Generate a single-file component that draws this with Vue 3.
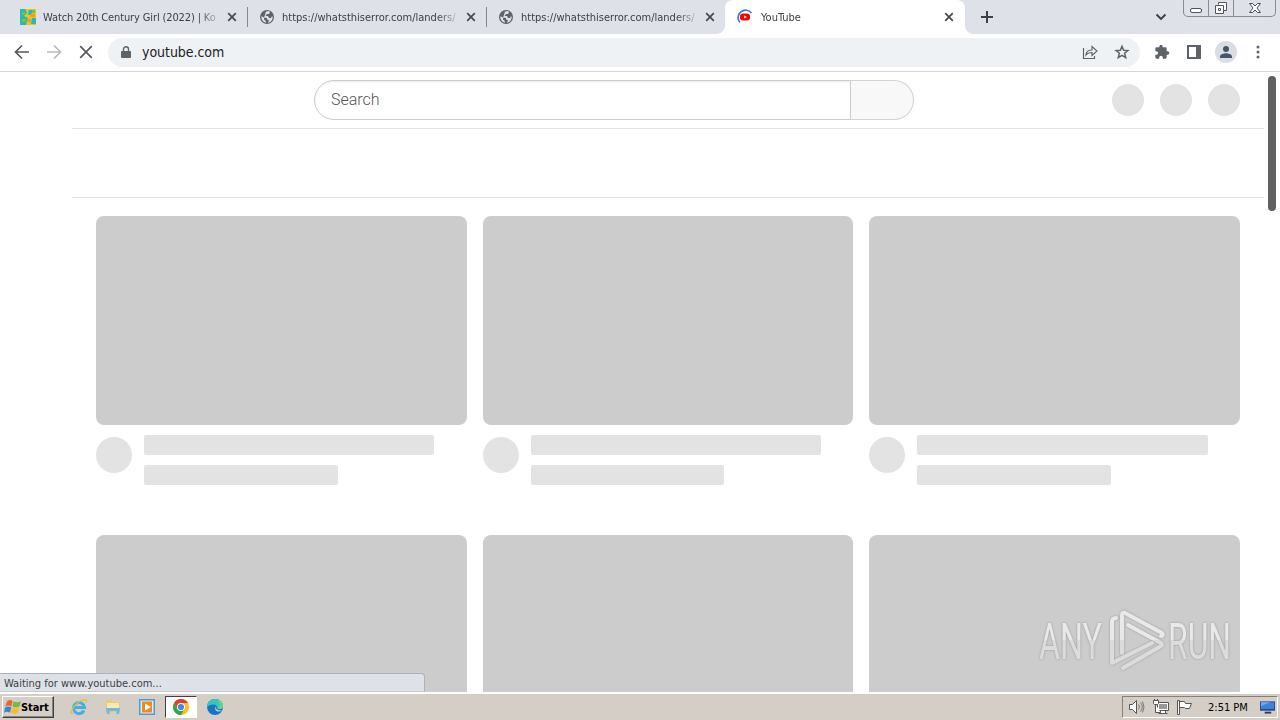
<template>
  <div class="screen">
    <div class="tab-strip">
      <div v-for="(tab, index) in tabs" :key="index" class="tab" :class="{ active: tab.active, divided: index < 2 }">
        <svg v-if="tab.icon === 'film'" class="favicon" viewBox="0 0 16 16">
          <path fill="#e5c52b" d="M0 0h16v16H0z" />
          <path fill="#28b9b0" d="M0 0h5l2 4-3 3 4 2-2 7H0zM9 1h4l-2 5H8zM12 9h4v6h-5z" />
          <path fill="#ef9d28" d="M10 5h5v3h-5zM7 10h4v3H7z" />
          <path fill="#6fc259" d="M2 3h3v3H2zM2 10h4v3H2zM12 1h3v3h-3z" />
        </svg>
        <svg v-else-if="tab.icon === 'globe'" class="favicon" viewBox="0 0 16 16">
          <circle cx="8" cy="8" r="7" fill="#5f6368" />
          <path fill="#dee1e8" d="M7 2.500 10 2l1 1-1 2H8L6.500 7H9l1 2h2l1-2 .7 1c0 3-2 5.500-4.700 5.700L10 11 8 10.500V9L5 8.500 2.500 7.200 2.300 8c0 3 2 5 4.500 5.700V12L5 10.500V9z" />
        </svg>
        <svg v-else class="favicon" viewBox="0 0 16 16">
          <path fill="none" stroke="#3b78d8" stroke-width="1.700" d="M2.800 13.500A7 7 0 0 1 14.500 4" />
          <rect x="3" y="4.500" width="10" height="7" rx="3" fill="#f00" />
          <path fill="#fff" d="m7.200 6.500 2.600 1.500-2.600 1.500z" />
        </svg>
        <span class="tab-title" :class="tab.icon">{{ tab.title }}</span>
        <svg class="tab-close" viewBox="0 0 10 10"><path d="m1.200 1.200 7.600 7.600M8.800 1.200 1.200 8.800" /></svg>
      </div>
      <svg class="new-tab" viewBox="0 0 12 12"><path d="M6 0v12M0 6h12" /></svg>
      <svg class="tab-search" viewBox="0 0 12 8"><path d="m1.500 1.500 4.500 4.500 4.500-4.500" /></svg>
      <div class="window-buttons">
        <span><svg width="14" height="16" viewBox="0 0 14 16"><rect x="1.500" y="8.500" width="11" height="4" rx="1.500" /></svg></span>
        <span><svg width="14" height="16" viewBox="0 0 14 16"><path d="M4.500 4.500v-2h8v8h-3M1.500 5.500h8v8h-8zM4.500 8.500h2v2h-2z" /></svg></span>
        <span class="wide"><svg width="14" height="16" viewBox="0 0 14 16"><path d="M1.500 3.500h3L7 6l2.500-2.500h3L9 8l3.500 4.500h-3L7 10l-2.500 2.500h-3L5 8z" /></svg></span>
      </div>
    </div>

    <div class="toolbar">
      <svg class="nav" viewBox="0 0 16 16"><path d="M15 8H2M8 1.500 1.500 8 8 14.500" /></svg>
      <svg class="nav disabled" viewBox="0 0 16 16"><path d="M1 8h13M8 1.500 14.500 8 8 14.500" /></svg>
      <svg class="nav" viewBox="0 0 16 16"><path d="m2.200 2.200 11.600 11.600M13.800 2.200 2.200 13.800" /></svg>
      <div class="omnibox">
        <svg class="lock" viewBox="0 0 10 13">
          <path fill="#5f6368" d="M1 5h8q1 0 1 1v5q0 1-1 1H1q-1 0-1-1V6q0-1 1-1z" />
          <path fill="none" stroke="#5f6368" stroke-width="1.400" d="M2.500 6V3.300a2.500 2.500 0 0 1 5 0V6" />
        </svg>
        <span class="url">youtube.com</span>
        <svg class="tool" viewBox="0 0 16 16"><path d="M1.500 4v10.500h11V12M4 11q.5-5 6-5V2.500L15 7l-5 4.500V8.500q-4 0-6 2.500z" /></svg>
        <svg class="tool star" viewBox="0 0 16 16"><path d="m8 2.200 1.600 4 4.300.3-3.300 2.800 1.100 4.300L8 11.300l-3.700 2.300 1.100-4.300-3.300-2.800 4.300-.3z" /></svg>
      </div>
      <svg class="ext" viewBox="0 0 24 24"><path fill="#5f6368" d="M20.500 11H19V7a2 2 0 0 0-2-2h-4V3.500a2.500 2.500 0 0 0-5 0V5H4a2 2 0 0 0-2 2v3.800h1.500a2.700 2.700 0 0 1 0 5.400H2V20a2 2 0 0 0 2 2h3.800v-1.500a2.700 2.700 0 0 1 5.400 0V22H17a2 2 0 0 0 2-2v-4h1.500a2.500 2.500 0 0 0 0-5z" /></svg>
      <svg class="panel" viewBox="0 0 14 14"><path fill="#5f6368" d="M0 0h14v14H0zM2 2v10h7V2z" fill-rule="evenodd" /></svg>
      <svg class="avatar" viewBox="0 0 22 22">
        <circle cx="11" cy="11" r="11" fill="#dadde3" />
        <path fill="#46536d" d="M11 5a3 3 0 1 1 0 6 3 3 0 0 1 0-6zM5 17v-1.500C5 13 9 12.200 11 12.200s6 .8 6 3.300V17z" />
      </svg>
      <svg class="dots" viewBox="0 0 4 14"><circle cx="2" cy="2" r="1.500" /><circle cx="2" cy="7" r="1.500" /><circle cx="2" cy="12" r="1.500" /></svg>
    </div>

    <div class="page">
      <div class="masthead">
        <div class="search">
          <div class="search-input">Search</div>
          <div class="search-button"></div>
        </div>
        <div class="icons"><i v-for="n in 3" :key="n"></i></div>
      </div>
      <div class="chips"></div>
      <div class="grid">
        <div v-for="n in 6" :key="n" class="video">
          <div class="thumb"></div>
          <div class="details">
            <div class="channel"></div>
            <div class="lines">
              <div class="line"></div>
              <div class="line short"></div>
            </div>
          </div>
        </div>
      </div>
      <div class="scrollbar"></div>
      <div class="status">Waiting for www.youtube.com...</div>
      <svg class="watermark" viewBox="0 0 200 70">
        <defs>
          <linearGradient id="shine" gradientUnits="userSpaceOnUse" x1="0" y1="0" x2="0" y2="70">
            <stop offset="0.5" stop-color="#e9e9e9" />
            <stop offset="0.5" stop-color="#dcdcdc" />
          </linearGradient>
        </defs>
        <g class="letters">
          <text x="3" y="54" textLength="63" lengthAdjust="spacingAndGlyphs">ANY</text>
          <text x="132" y="54" textLength="63" lengthAdjust="spacingAndGlyphs">RUN</text>
        </g>
        <g class="mark">
          <path d="M80 13q-4 0-4 4v41l40-20" />
          <path d="M86 48V10q0-3 3-2l37 20q2 2-1 3" />
          <path d="m92 20 33 18q2 2 0 3L87 63" />
        </g>
      </svg>
    </div>

    <div class="taskbar">
      <div class="start">
        <svg viewBox="0 0 16 16">
          <path fill="#e8652b" d="M3 2q3-2 5 0L7 7Q4 5 1 7z" />
          <path fill="#79b843" d="M9 2q3 2 7 0l-1.500 5q-3.500 2-6.500 0z" />
          <path fill="#3a84d2" d="M1 8q3-2 6 0l-1.500 5Q3 11 0 13z" />
          <path fill="#f5bd26" d="M8 8q3 2 6.500 0L13 13q-3 2-6.500 0z" />
        </svg>
        <span>Start</span>
      </div>
      <div class="app">
        <svg viewBox="0 0 18 18">
          <path fill="none" stroke="#42aee4" stroke-width="3" d="M14 12.500A5.500 5.500 0 1 1 14.500 9.500H5" />
          <path fill="none" stroke="#e5bd42" stroke-width="1.300" d="M3 15Q-1 17 3 10 7 4 13 2q5-1 3 3" />
        </svg>
      </div>
      <div class="app">
        <svg viewBox="0 0 18 18">
          <path fill="#e8cc72" d="M2 2h5l1 2h8v10H2z" />
          <path fill="#f8eab0" d="M3 5h12v5H3z" />
          <path fill="#72bada" d="M2 10h14l-1 6h-2.500v-3h-7v3H3z" />
        </svg>
      </div>
      <div class="app">
        <svg viewBox="0 0 18 18">
          <path fill="#4d9bd0" d="M1 1h16v16H1z" /><path fill="#d9edf7" d="M2.500 2.500h13v13h-13z" />
          <path fill="#f18a1d" d="M4 3.500h10v11H4z" /><path fill="#fff" d="m7 5.500 6 3.500-6 3.500z" />
        </svg>
      </div>
      <div class="app pressed">
        <svg viewBox="0 0 18 18">
          <circle cx="9" cy="9" r="8" fill="#fbc116" />
          <path fill="#e33b2e" d="M2.070 5A8 8 0 0 1 15.930 5H9L5.500 11z" />
          <path fill="#2da94f" d="M2.070 5A8 8 0 0 0 9 17l3.500-6h-7z" />
          <circle cx="9" cy="9" r="4" fill="#fff" /><circle cx="9" cy="9" r="3.100" fill="#4285f4" />
        </svg>
      </div>
      <div class="app">
        <svg viewBox="0 0 18 18">
          <circle cx="9" cy="9" r="8" fill="#1674c5" />
          <path fill="#38c5c1" d="M1 9C1 4 4.500 1 9 1s8 3 8 7c0 4-5 4-6 2 1-4-6-5-10-1z" />
          <path fill="#67d579" d="M13 2.200c2.500 1.400 4 3.500 4 5.800 0 3.500-4 3.800-5.500 2.600C15 9 15 5 11 3z" />
          <path fill="#d6d0c8" d="M10 8q-1 5 6 4.500-2 1.500-5 .8-3-1-1-5.300z" />
        </svg>
      </div>
      <div class="tray">
        <svg class="speaker" viewBox="0 0 18 16">
          <path fill="#fff" stroke="#555" d="M1.500 5.500h3l4-4v13l-4-4h-3z" />
          <path fill="none" stroke="#777" d="M10.500 5.500q2 2.500 0 5M12.500 3.500q3.500 4.500 0 9M14.500 2.500q3 5.500 0 11" />
        </svg>
        <svg class="network" viewBox="0 0 16 16">
          <path fill="#fff" stroke="#555" d="M4.500 3.500h11v8h-11zM7.500 11.500h5v3h-5zM5.500 14.500h9" /><path fill="#999" d="M6 5h8v5H6z" />
          <path fill="#fff" stroke="#555" d="M.5 1.500h5v3l-1 1h-3l-1-1zM2.500 5v8.500h5M1.500 0v2M4.500 0v2" />
        </svg>
        <svg class="flag" viewBox="0 0 16 16"><path fill="#fff" stroke="#555" d="M1.500 1.500h2v14h-2zM3.500 2.500h5l1 2h6l-2 5h-4l-1-1h-5z" /></svg>
        <span class="clock">2:51 PM</span>
        <svg class="desktop" viewBox="0 0 16 14"><path fill="#234e95" d="M0 1h16v10H0z" /><path fill="#3e83d9" d="M1 2h14v7H1z" /><path fill="#72adf0" d="M1 2h10L1 6z" /><path fill="#353c48" d="M5 12h7v2H5z" /></svg>
      </div>
    </div>
  </div>
</template>

<script setup>
import { ref } from 'vue';

const tabs = ref([
  { title: 'Watch 20th Century Girl (2022) | Ko', icon: 'film' },
  { title: 'https://whatsthiserror.com/landers/', icon: 'globe' },
  { title: 'https://whatsthiserror.com/landers/', icon: 'globe' },
  { title: 'YouTube', icon: 'youtube', active: true },
]);
</script>

<style>
body {
  margin: 0;
  overflow: hidden;
}
</style>

<style scoped>
* {
  box-sizing: border-box;
}

svg {
  display: block;
  flex: none;
}

.screen {
  width: 1280px;
  height: 720px;
  display: flex;
  flex-direction: column;
  overflow: hidden;
  background: #fff;
  font-family: Tahoma, "DejaVu Sans Condensed", "DejaVu Sans", sans-serif;
  font-stretch: condensed;
  font-size: 11px;
  color: #3c4043;
}

.tab-strip {
  display: flex;
  height: 34px;
  padding-left: 8px;
  background: #dee1e8;
  flex: none;
}

.tab {
  position: relative;
  display: flex;
  align-items: center;
  width: 239px;
  height: 34px;
  padding: 0 10px 0 12px;
}

.tab.divided::after {
  content: "";
  position: absolute;
  right: -1px;
  top: 7px;
  width: 1px;
  height: 20px;
  background: #85888e;
}

.tab.active {
  width: 240px;
  padding-right: 11px;
  background: #fff;
  border-radius: 8px 8px 0 0;
}

.tab.active::before,
.tab.active::after {
  content: "";
  position: absolute;
  bottom: 0;
  left: -8px;
  width: 8px;
  height: 8px;
  background: radial-gradient(circle at 0 0, transparent 7.500px, #fff 8px);
}

.tab.active::after {
  left: auto;
  right: -8px;
  background: radial-gradient(circle at 100% 0, transparent 7.500px, #fff 8px);
}

.favicon {
  width: 16px;
  height: 16px;
}

.tab-title {
  width: 176px;
  margin-left: 7px;
  padding-top: 1px;
  white-space: nowrap;
  line-height: 16px;
  mask-image: linear-gradient(90deg, #000 155px, transparent 180px);
}

.tab-title.film {
  letter-spacing: -0.130px;
}

.tab-title.youtube {
  margin-left: 8px;
}

.tab-close {
  width: 10px;
  height: 10px;
  margin-left: auto;
  fill: none;
  stroke: #45484d;
  stroke-width: 1.700;
}

.new-tab {
  width: 12px;
  height: 12px;
  margin: 11px 0 0 16px;
  stroke: #3c4043;
  stroke-width: 2;
}

.tab-search {
  width: 12px;
  height: 8px;
  margin: 13px 0 0 auto;
  fill: none;
  stroke: #3c4043;
  stroke-width: 1.900;
}

.window-buttons {
  display: flex;
  width: 93px;
  height: 17px;
  margin: 0 4px 0 16px;
  border: 1px solid #898b92;
  border-top: 0;
  border-radius: 0 0 5px 5px;
}

.window-buttons span {
  display: flex;
  justify-content: center;
  width: 25px;
  height: 16px;
  border-right: 1px solid #898b92;
}

.window-buttons .wide {
  width: 41px;
  border: 0;
}

.window-buttons svg {
  fill: #fff;
  stroke: #50535b;
}

.toolbar {
  display: flex;
  align-items: center;
  height: 38px;
  padding: 0 18px 0 14px;
  border-bottom: 1px solid #d5d6d8;
  flex: none;
}

.toolbar > * {
  position: relative;
  top: -0.500px;
}

.nav {
  width: 16px;
  height: 16px;
  margin-right: 16px;
  fill: none;
  stroke: #55585d;
  stroke-width: 1.700;
}

.nav.disabled {
  stroke: #b9bbbe;
}

.omnibox {
  display: flex;
  align-items: center;
  width: 1032px;
  height: 29px;
  margin-left: -2px;
  padding: 0 10px 0 13px;
  background: #eff2f5;
  border-radius: 15px;
}

.lock {
  width: 10px;
  height: 13px;
}

.url {
  flex: 1;
  margin-left: 11px;
  font-size: 14px;
  line-height: 16px;
  letter-spacing: -0.050px;
  color: #202124;
}

.tool {
  width: 16px;
  height: 16px;
  margin-left: 16px;
  fill: none;
  stroke: #5f6368;
  stroke-width: 1.200;
}

.star {
  stroke-width: 1.500;
}

.ext {
  width: 16px;
  height: 16px;
  margin-left: 14px;
}

.panel {
  width: 14px;
  height: 14px;
  margin-left: 17px;
}

.avatar {
  width: 22px;
  height: 22px;
  margin-left: 14px;
}

.dots {
  width: 4px;
  height: 14px;
  margin-left: auto;
  margin-right: 2px;
  fill: #5f6368;
}

.page {
  position: relative;
  height: 620px;
  flex: none;
  overflow: hidden;
}

.masthead {
  display: flex;
  align-items: center;
  height: 57px;
  margin: 0 16px 0 72px;
  padding: 0 24px 0 242px;
  border-bottom: 1px solid #e3e3e3;
}

.search {
  display: flex;
  width: 600px;
  height: 40px;
}

.search-input {
  width: 537px;
  padding-left: 16px;
  border: 1px solid #ccc;
  border-radius: 20px 0 0 20px;
  box-shadow: inset 0 1px 2px #eee;
  font: 300 16px/38px Roboto, sans-serif;
  color: #555;
}

.search-button {
  width: 63px;
  background: #f8f8f8;
  border: 1px solid #d3d3d3;
  border-left: 0;
  border-radius: 0 20px 20px 0;
}

.icons {
  display: flex;
  gap: 16px;
  margin-left: auto;
}

.icons i {
  width: 32px;
  height: 32px;
  border-radius: 50%;
  background: #e3e3e3;
}

.chips {
  height: 69px;
  margin: 0 16px 0 72px;
  border-bottom: 1px solid #e3e3e3;
}

.grid {
  display: grid;
  grid-template-columns: repeat(3, 1fr);
  column-gap: 16px;
  margin: 18px 40px 0 96px;
}

.video {
  height: 319px;
}

.thumb {
  height: 209px;
  border-radius: 8px;
  background: #ccc;
}

.details {
  display: flex;
  gap: 12px;
  padding-top: 10px;
}

.channel {
  width: 36px;
  height: 36px;
  margin-top: 2px;
  border-radius: 50%;
  background: #e3e3e3;
}

.lines {
  flex: 1;
}

.line {
  width: 90%;
  height: 20px;
  margin-bottom: 10px;
  border-radius: 2px;
  background: #e3e3e3;
}

.line.short {
  width: 60%;
}

.scrollbar {
  position: absolute;
  top: 4px;
  right: 4px;
  width: 8px;
  height: 135px;
  border-radius: 4px;
  background: #606060;
}

.status {
  position: absolute;
  left: 0;
  bottom: 0;
  width: 425px;
  height: 19px;
  padding: 1px 0 0 4px;
  background: #dee1e8;
  border: 1px solid #afb1b8;
  border-left: 0;
  border-bottom-color: #c9cbd0;
  border-radius: 0 4px 0 0;
  line-height: 17px;
}

.watermark {
  position: absolute;
  left: 1036px;
  top: 533px;
  width: 200px;
  height: 70px;
  fill: none;
  filter: drop-shadow(0 0 1px rgba(100, 100, 100, 0.5));
}

.letters {
  font: 400 50px Roboto, sans-serif;
  fill: url(#shine);
}

.mark {
  stroke: url(#shine);
  stroke-width: 4;
  stroke-linecap: round;
  stroke-linejoin: round;
}

.taskbar {
  display: flex;
  align-items: center;
  height: 28px;
  padding: 0 2px;
  background: #d5cec6;
  border-top: 2px solid #fff;
  flex: none;
}

.start {
  display: flex;
  align-items: center;
  width: 52px;
  height: 22px;
  padding-left: 1px;
  border: 1px solid #fff;
  border-right-color: #404040;
  border-bottom-color: #404040;
  box-shadow: inset -1px -1px #888480;
  font-weight: bold;
  color: #000;
  margin-right: 9px;
}

.start svg {
  width: 17px;
  height: 17px;
}

.start span {
  letter-spacing: -0.100px;
}

.app {
  display: flex;
  align-items: center;
  justify-content: center;
  width: 32px;
  height: 22px;
  margin-right: 2px;
}

.app svg {
  width: 18px;
  height: 18px;
}

.pressed {
  background: #fff;
  border: 1px solid #404040;
  border-right-color: #fff;
  border-bottom-color: #fff;
}

.tray {
  display: flex;
  align-items: center;
  width: 156px;
  height: 22px;
  margin-left: auto;
  padding-left: 5px;
  border: 1px solid #858078;
  border-right-color: #fff;
  border-bottom-color: #fff;
  color: #000;
}

.speaker {
  width: 18px;
  height: 16px;
}

.network,
.flag {
  width: 16px;
  height: 16px;
  margin-left: 7px;
}

.clock {
  margin-left: 16px;
  white-space: nowrap;
}

.desktop {
  width: 15px;
  height: 14px;
  margin-left: auto;
  margin-right: 2px;
}
</style>
